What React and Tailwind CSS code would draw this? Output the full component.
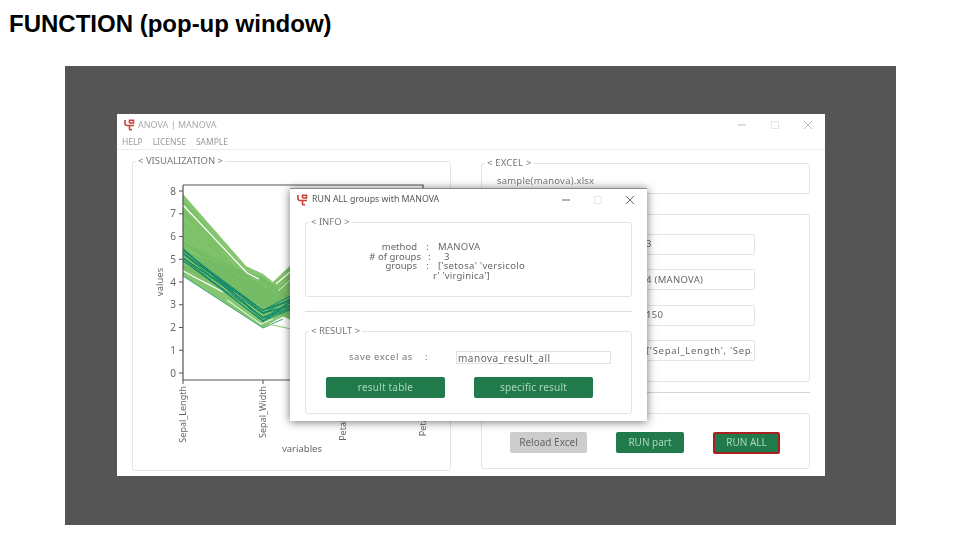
import React from "react";

const sans = "font-['Noto_Sans','Liberation_Sans',sans-serif]";

// seeded so the lines stay the same between runs
let seed = 7;
const rnd = (a, b) => {
  seed = (seed * 16807) % 2147483647;
  return a + ((seed % 10000) / 10000) * (b - a);
};
const yOf = (v) => 372 - 22.75 * v;

const makeLines = (n, sl, sw, pl) =>
  Array.from({ length: n }, () => {
    const a = rnd(sl[0], sl[1]);
    const b = rnd(sw[0], sw[1]);
    const c = rnd(pl[0], pl[1]);
    return `182,${yOf(a).toFixed(1)} 262,${yOf(b).toFixed(1)} 342,${yOf(c).toFixed(1)}`;
  });

const lightLines = makeLines(50, [5.6, 7.7], [2.4, 3.7], [4.6, 6.8]);
const midLines = makeLines(40, [4.4, 5.8], [2.9, 4.2], [1, 1.9]);
const tealLines = makeLines(12, [4.9, 5.5], [2.25, 2.9], [3.4, 4.8]);

const yTicks = [8, 7, 6, 5, 4, 3, 2, 1, 0];
const xTicks = [
  { x: 182, label: "Sepal_Length" },
  { x: 262, label: "Sepal_Width" },
  { x: 342, label: "Petal_Length" },
  { x: 422, label: "Petal_Width" },
];

const Logo = () => (
  <svg width="11" height="12" viewBox="0 0 11 12" fill="none" stroke="#c8423c" strokeWidth="1.6" className="shrink-0">
    <path d="M1 1v3.5Q1 6.5 3 6.5H10" />
    <path d="M5.5 6.5V10Q5.5 11.2 8 10.6" />
    <path d="M5.5 4V1.2H9.5V4H5.5" />
  </svg>
);

const WinControls = ({ color, gap }) => (
  <div className={`flex items-center ${gap}`}>
    <svg width="10" height="10" viewBox="0 0 10 10" stroke={color} strokeWidth="1"><path d="M1 5H9" /></svg>
    <svg width="10" height="10" viewBox="0 0 10 10" stroke="#e6e6e6" fill="none" strokeWidth="1"><rect x="1.5" y="1.5" width="7" height="7" /></svg>
    <svg width="10" height="10" viewBox="0 0 10 10" stroke={color} strokeWidth="1"><path d="M1 1L9 9M9 1L1 9" /></svg>
  </div>
);

const Group = ({ title, className = "", children }) => (
  <div className={`relative rounded-[3px] border border-[#e4e4e4] ${className}`}>
    <span className="absolute left-[3px] top-[-7px] bg-white px-[2px] text-[9.5px] leading-[12px] text-[#777]">{`< ${title} >`}</span>
    {children}
  </div>
);

const Field = ({ children }) => (
  <div className="ml-auto mr-[54px] flex h-[21px] w-[122px] items-center rounded-[2px] border border-[#e4e4e4] pl-[12px] pr-[2px] text-[9.5px] tracking-[0.3px] text-[#666]">
    <span className="overflow-hidden whitespace-nowrap">{children}</span>
  </div>
);

const Chart = () => (
  <svg width="290" height="285" viewBox="150 175 290 285" className="ml-[18px] mt-[14px] block">
    <polygon points="182,193 245,265 262,273 272,281 295,259 295,310 277,318 262,327 182,275" fill="#86c670" />
    {lightLines.map((p, i) => (
      <polyline key={i} points={p} fill="none" stroke="#7cc068" strokeWidth="1" />
    ))}
    {midLines.map((p, i) => (
      <polyline key={i} points={p} fill="none" stroke="#74bb66" strokeWidth="1" />
    ))}
    {tealLines.map((p, i) => (
      <polyline key={i} points={p} fill="none" stroke="#12896a" strokeWidth="1" />
    ))}
    <polyline points="182,204 246,272 258,278" fill="none" stroke="#fff" strokeWidth="1.2" />
    <polyline points="182,270 222,291" fill="none" stroke="#fff" strokeWidth="1.2" />
    <polyline points="226,299 260,323 272,318" fill="none" stroke="#dff0d8" strokeWidth="1.2" />
    <polyline points="275,283 295,266" fill="none" stroke="#fff" strokeWidth="1.2" />
    <polyline points="277,290 295,274" fill="none" stroke="#e8f5e2" strokeWidth="1" />
    <polyline points="182,275 262,327 282,318" fill="none" stroke="#3fa578" strokeWidth="1" />
    <polyline points="262,322 295,329" fill="none" stroke="#8acb78" strokeWidth="1" />

    <path d="M182 184H422V188M182 184V379H422" fill="none" stroke="#555" strokeWidth="1.2" />
    {yTicks.map((t) => (
      <g key={t}>
        <path d={`M178 ${yOf(t)}H182`} stroke="#555" strokeWidth="1" />
        <text x="172" y={yOf(t) + 3.5} textAnchor="middle" fontSize="10" fill="#666" fontFamily="Noto Sans">{t}</text>
      </g>
    ))}
    {xTicks.map((t) => (
      <g key={t.x}>
        <path d={`M${t.x} 379V383`} stroke="#555" strokeWidth="1" />
        <text transform={`translate(${t.x + 2.5} 385) rotate(-90)`} textAnchor="end" fontSize="9" fill="#666" fontFamily="Noto Sans">{t.label}</text>
      </g>
    ))}
    <text transform="translate(162 281) rotate(-90)" textAnchor="middle" fontSize="9.5" fill="#666" fontFamily="Noto Sans">values</text>
    <text x="301" y="451" textAnchor="middle" fontSize="9.5" fill="#666" fontFamily="Noto Sans">variables</text>
  </svg>
);

const GreenButton = ({ className = "", children }) => (
  <div className={`flex items-center justify-center rounded-[2px] bg-[#217a4b] text-[10px] text-[#a9d8b9] ${className}`}>
    {children}
  </div>
);

const Popup = () => (
  <div className="absolute left-[173px] top-[74px] flex h-[233px] w-[357px] flex-col border-t border-[#8a8a8a] bg-white shadow-[0_1px_9px_rgba(0,0,0,0.55)]">
    <div className="flex h-[21px] shrink-0 items-center pl-[7px] pr-[12px] pt-[1px]">
      <Logo />
      <span className="ml-[4px] text-[8.8px] text-[#555]">RUN ALL groups with MANOVA</span>
      <div className="ml-auto"><WinControls color="#666" gap="gap-[22px]" /></div>
    </div>
    <div className="flex flex-1 flex-col px-[15px] pt-[12px]">
      <Group title="INFO" className="h-[75px] shrink-0">
        <div className="ml-[41px] mt-[19px] grid grid-cols-[70px_21px_1fr] text-[9.5px] leading-[9.6px] text-[#666]">
          <span className="text-right">method</span><span className="text-center">:</span><span className="tracking-[0.3px]">MANOVA</span>
          <span className="mr-[-4px] text-right">{"# of groups"}</span><span className="pl-[4px] text-center">:</span><span className="pl-[6px]">3</span>
          <span className="text-right">groups</span><span className="text-center">:</span><span className="tracking-[0.35px]">{"['setosa' 'versicolo"}</span>
          <span /><span /><span className="ml-[-5px] tracking-[0.2px]">{"r' 'virginica']"}</span>
        </div>
      </Group>
      <div className="mt-[14px] h-px shrink-0 bg-[#dddddd]" />
      <Group title="RESULT" className="mt-[19px] h-[83px] shrink-0">
        <div className="mt-[19px] flex h-[13px] items-center text-[9.5px] text-[#777]">
          <span className="ml-[43px] w-[72px] whitespace-nowrap tracking-[0.5px]">save excel as</span>
          <span className="ml-[4px] w-[31px]">:</span>
          <span className="flex h-[13px] w-[155px] items-center border border-[#e2e2e2] pl-[1px] text-[10px] leading-none tracking-[0.5px] text-[#666]">manova_result_all</span>
        </div>
        <div className="ml-[20px] mt-[13px] flex gap-[29px]">
          <GreenButton className="h-[21px] w-[119px] tracking-[0.2px]">result table</GreenButton>
          <GreenButton className="h-[21px] w-[119px] tracking-[0.2px]">specific result</GreenButton>
        </div>
      </Group>
    </div>
  </div>
);

const AppWindow = () => (
  <div className={`relative ml-[52px] h-[362px] w-[708px] bg-white blur-[0.5px] ${sans}`}>
    <div className="flex h-[21px] items-center pl-[7px] pr-[12px] pt-[1px]">
      <Logo />
      <span className="ml-[3px] text-[9px] text-[#aaa]">ANOVA | MANOVA</span>
      <div className="ml-auto"><WinControls color="#bbb" gap="gap-[23px]" /></div>
    </div>
    <div className="flex h-[15px] items-center gap-[10px] border-b border-[#efefef] pl-[5px] pt-[1px] text-[8.5px] text-[#999]">
      <span>HELP</span>
      <span>LICENSE</span>
      <span>SAMPLE</span>
    </div>
    <div className="flex pl-[15px] pt-[11px]">
      <Group title="VISUALIZATION" className="h-[310px] w-[319px] shrink-0">
        <Chart />
      </Group>
      <div className="ml-[30px] flex w-[329px] shrink-0 flex-col pt-[2px]">
        <Group title="EXCEL" className="flex h-[31px] shrink-0 items-center pl-[15px] pt-[5px] text-[9.5px] tracking-[0.2px] text-[#777]">
          sample(manova).xlsx
        </Group>
        <div className="mt-[20px] flex h-[168px] shrink-0 flex-col gap-[14.4px] rounded-[3px] border border-[#e4e4e4] pt-[19px]">
          <Field>3</Field>
          <Field>4 (MANOVA)</Field>
          <Field>150</Field>
          <Field><span className="tracking-[0.7px]">{"['Sepal_Length', 'Sepal_Width']"}</span></Field>
        </div>
        <div className="mt-[10px] h-px shrink-0 bg-[#d4d4d4]" />
        <div className="mt-[20px] flex h-[56px] shrink-0 items-center rounded-[3px] border border-[#e4e4e4] pl-[28px] pt-[3px]">
          <div className="flex h-[21px] w-[77px] items-center justify-center rounded-[2px] bg-[#cdcdcd] text-[10px] text-[#666]">Reload Excel</div>
          <GreenButton className="ml-[29px] h-[21px] w-[68px]">RUN part</GreenButton>
          <GreenButton className="ml-[29px] h-[22px] w-[67px] border-2 border-[#a8201f]">RUN ALL</GreenButton>
        </div>
      </div>
    </div>
    <Popup />
  </div>
);

export default function App() {
  return (
    <div className="h-[540px] w-[960px] overflow-hidden bg-white">
      <div className="flex h-[66px] items-start pl-[9px] pt-[10px] font-['Liberation_Sans',sans-serif] text-[24px] font-bold leading-[28px] text-black">
        FUNCTION (pop-up window)
      </div>
      <div className="ml-[65px] h-[459px] w-[831px] bg-[#555555] pt-[48px]">
        <AppWindow />
      </div>
    </div>
  );
}
